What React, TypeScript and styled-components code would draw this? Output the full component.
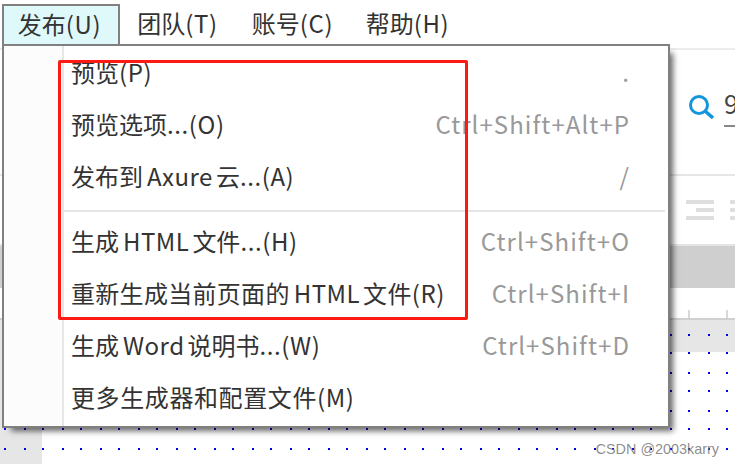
import { Fragment } from 'react';
import styled, { createGlobalStyle } from 'styled-components';

const GlobalStyle = createGlobalStyle`
  html, body {
    margin: 0;
    padding: 0;
    background: #fff;
  }
`;

const tabs = [
  { label: '发布(U)', active: true },
  { label: '团队(T)', active: false },
  { label: '账号(C)', active: false },
  { label: '帮助(H)', active: false },
];

const groups = [
  [
    { label: '预览(P)', keys: '.', tracking: 0 },
    { label: '预览选项...(O)', keys: 'Ctrl+Shift+Alt+P', tracking: 0 },
    { label: '发布到Axure云...(A)', keys: '/', tracking: 0 },
  ],
  [
    { label: '生成HTML文件...(H)', keys: 'Ctrl+Shift+O', tracking: 0 },
    { label: '重新生成当前页面的HTML文件(R)', keys: 'Ctrl+Shift+I', tracking: 0.3 },
    { label: '生成Word说明书...(W)', keys: 'Ctrl+Shift+D', tracking: 0 },
    { label: '更多生成器和配置文件(M)', keys: '', tracking: 0.6 },
  ],
];

// latin words sit a little apart from the chinese text around them
const Label = ({ text }: { text: string }) => {
  const parts = text.split(/([A-Za-z]{2,}|[().A-Z]+)/).filter(Boolean);
  return (
    <span>
      {parts.map((part, i) => {
        if (/^[A-Za-z]{2,}$/.test(part)) return <Word key={i}>{part}</Word>;
        if (/^[().A-Z]+$/.test(part)) return <Latin key={i}>{part}</Latin>;
        return <span key={i}>{part}</span>;
      })}
    </span>
  );
};

const App = () => {
  return (
    <Page>
      <GlobalStyle />
      <MenuBar>
        {tabs.map((tab) => (
          <Tab key={tab.label} $active={tab.active}>
            <Label text={tab.label} />
          </Tab>
        ))}
      </MenuBar>
      <Workspace>
        <SearchRow>
          <SearchIcon width="26" height="24" viewBox="0 0 26 24">
            <circle cx="11" cy="10" r="8.5" fill="none" stroke="#1296db" strokeWidth="3" />
            <path d="M17 16l8 7" stroke="#1296db" strokeWidth="3.5" />
          </SearchIcon>
          <SearchValue>9</SearchValue>
        </SearchRow>
        <AlignRow>
          <AlignIcon>
            <AlignBar />
            <AlignBar $short />
            <AlignBar />
          </AlignIcon>
          <AlignIcon>
            <AlignBar />
            <AlignBar />
            <AlignBar />
          </AlignIcon>
        </AlignRow>
        <GrayBand />
        <Ruler />
        <Canvas>
          <CanvasBand />
          <CanvasBody>
            <SideRuler />
          </CanvasBody>
          <DotGrid width="735" height="144">
            <defs>
              <pattern id="dots" width="38" height="38" patternUnits="userSpaceOnUse">
                <rect x="4" y="14" width="2" height="2" fill="#0000e6" />
                <rect x="24" y="14" width="2" height="2" fill="#0000e6" />
                <rect x="4" y="32" width="2" height="2" fill="#0000e6" />
                <rect x="24" y="32" width="2" height="2" fill="#0000e6" />
              </pattern>
            </defs>
            <rect width="735" height="144" fill="url(#dots)" />
          </DotGrid>
        </Canvas>
      </Workspace>
      <Dropdown>
        <Gutter />
        <Items>
          {groups.map((group, i) => (
            <Fragment key={i}>
              {i > 0 && <Separator />}
              {group.map((item) => (
                <Item key={item.label} $tracking={item.tracking}>
                  <Label text={item.label} />
                  <Keys>{item.keys}</Keys>
                </Item>
              ))}
            </Fragment>
          ))}
        </Items>
      </Dropdown>
      <Highlight />
      <Watermark>CSDN @2003karry</Watermark>
    </Page>
  );
};

const Page = styled.div`
  position: relative;
  width: 735px;
  height: 464px;
  overflow: hidden;
  display: flex;
  flex-direction: column;
  background: #fff;
  font-family: 'Noto Sans CJK SC', 'Noto Sans', sans-serif;
  font-size: 24px;
  color: #333;
`;

const Word = styled.span`
  margin: 0 3px 0 4px;
  letter-spacing: 0.5px;
`;

const Latin = styled.span`
  letter-spacing: 0.6px;
`;

const MenuBar = styled.div`
  display: flex;
  align-items: stretch;
  height: 40px;
  margin-top: 4px;
  margin-left: 2px;
  flex-shrink: 0;
`;

const Tab = styled.div<{ $active: boolean }>`
  display: flex;
  align-items: center;
  justify-content: center;
  box-sizing: border-box;
  width: ${({ $active }) => ($active ? '118px' : '115px')};
  padding-bottom: 4px;
  padding-right: ${({ $active }) => ($active ? '3px' : '0')};
  background: ${({ $active }) => ($active ? '#dff9fb' : 'transparent')};
  border: ${({ $active }) => ($active ? '2px solid #808080' : 'none')};
  border-bottom: none;
`;

const Workspace = styled.div`
  flex: 1;
  display: flex;
  flex-direction: column;
  align-items: stretch;
  border-top: 2px solid #ececec;
  margin-top: 4px;
`;

const SearchRow = styled.div`
  display: flex;
  align-items: flex-start;
  height: 84px;
  padding: 40px 0 0 688px;
  border-bottom: 2px solid #e6e6e6;
`;

const SearchIcon = styled.svg`
  margin-top: 5px;
  margin-right: 10px;
  flex-shrink: 0;
`;

const SearchValue = styled.div`
  width: 11px;
  height: 35px;
  font-size: 26px;
  line-height: 26px;
  overflow: hidden;
  color: #444;
  border-bottom: 2px solid #888;
`;

const AlignRow = styled.div`
  display: flex;
  align-items: flex-start;
  gap: 16px;
  height: 44px;
  padding: 24px 0 0 686px;
`;

const AlignIcon = styled.div`
  display: flex;
  flex-direction: column;
  align-items: flex-end;
  gap: 4px;
  width: 28px;
  flex-shrink: 0;
`;

const AlignBar = styled.div<{ $short?: boolean }>`
  width: ${({ $short }) => ($short ? '18px' : '28px')};
  height: 4px;
  background: #dedede;
`;

const GrayBand = styled.div`
  height: 42px;
  background: #cfcfcf;
  border-top: 2px solid #e4e4e4;
`;

const Ruler = styled.div`
  height: 30px;
  border-bottom: 2px solid #d0d0d0;
  background-image: linear-gradient(90deg, transparent 4px, #d8d8d8 4px 6px, transparent 6px);
  background-size: 38px 8px;
  background-repeat: repeat-x;
  background-position: 0 100%;
`;

const Canvas = styled.div`
  position: relative;
  flex: 1;
  display: flex;
  flex-direction: column;
`;

const CanvasBand = styled.div`
  height: 32px;
  background: #e6e6e6;
`;

const CanvasBody = styled.div`
  flex: 1;
  display: flex;
`;

const SideRuler = styled.div`
  width: 42px;
  background: #e6e6e6;
`;

const DotGrid = styled.svg`
  position: absolute;
  left: 0;
  top: 0;
`;

const Dropdown = styled.div`
  position: absolute;
  left: 2px;
  top: 44px;
  width: 668px;
  height: 384px;
  box-sizing: border-box;
  display: flex;
  background: #fff;
  border: 2px solid #808080;
  box-shadow: 6px 6px 6px -3px rgba(0, 0, 0, 0.6);
`;

const Gutter = styled.div`
  width: 58px;
  background: #fcfcfc;
  border-right: 2px solid #e6e6e6;
`;

const Items = styled.div`
  flex: 1;
  padding-top: 2px;
`;

const Separator = styled.div`
  height: 2px;
  margin: 6px 3px 5px 0;
  background: #e6e6e6;
`;

const Item = styled.div<{ $tracking: number }>`
  display: flex;
  align-items: center;
  justify-content: space-between;
  box-sizing: border-box;
  height: 52px;
  padding: 0 38px 6px 7px;
  white-space: nowrap;
  letter-spacing: ${({ $tracking }) => $tracking}px;
`;

const Keys = styled.span`
  color: #999;
  letter-spacing: 1.05px;
`;

const Highlight = styled.div`
  position: absolute;
  left: 58px;
  top: 60px;
  width: 410px;
  height: 260px;
  box-sizing: border-box;
  border: 3px solid #fe1a12;
  border-radius: 2px;
`;

const Watermark = styled.div`
  position: absolute;
  right: 16px;
  bottom: 7px;
  font-family: 'Liberation Sans', sans-serif;
  font-size: 14.4px;
  color: rgba(120, 120, 120, 0.85);
`;

export default App;
